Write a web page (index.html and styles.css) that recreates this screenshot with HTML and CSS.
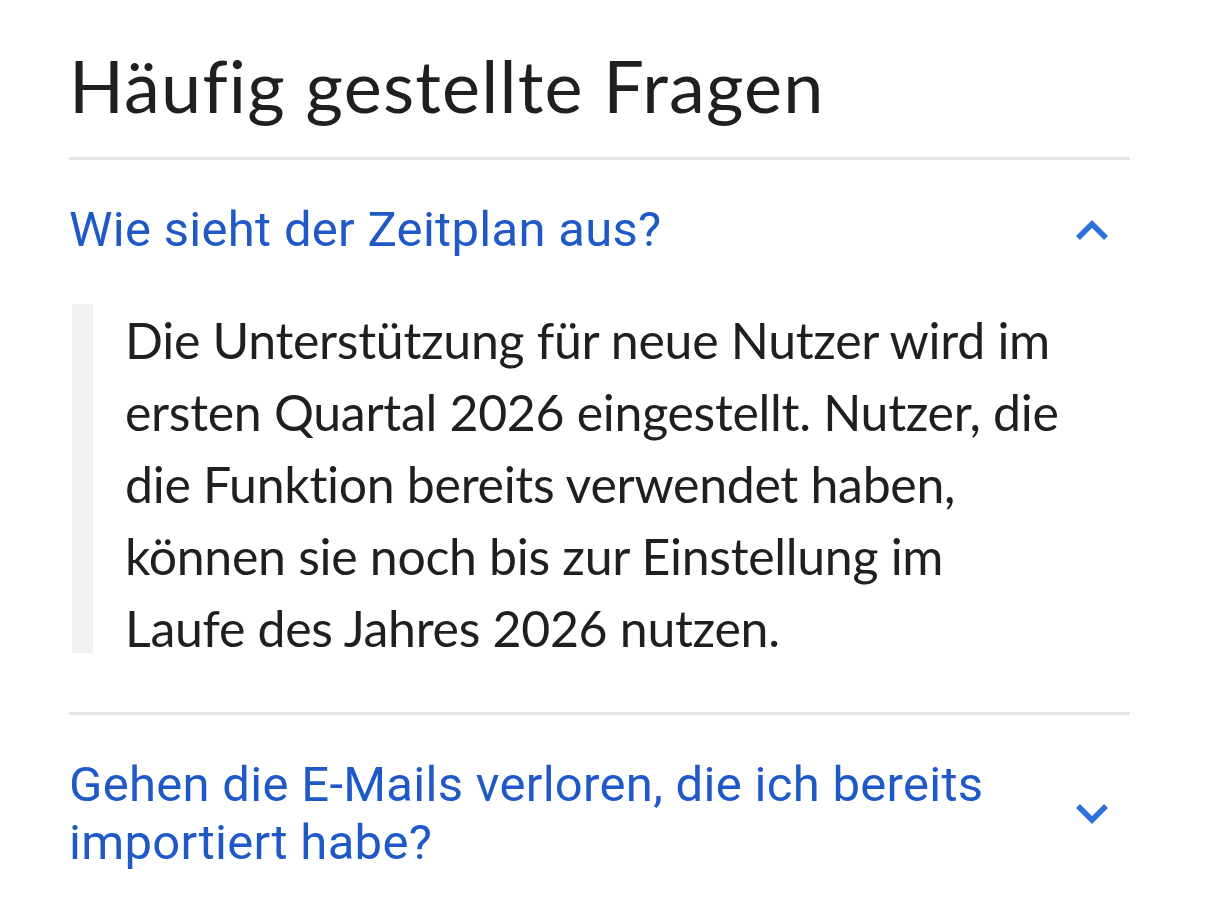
FILE: index.html
```html
<!DOCTYPE html>
<html lang="de">
<head>
    <meta charset="UTF-8">
    <meta name="viewport" content="width=device-width, initial-scale=1.0">
    <title>Häufig gestellte Fragen</title>
    <link rel="stylesheet" href="styles.css">
</head>
<body>
    <div class="faq">
        <h1>Häufig gestellte Fragen</h1>

        <div class="faq-item open">
            <div class="faq-question">
                <span>Wie sieht der Zeitplan aus?</span>
                <svg class="chevron" width="36" height="20" viewBox="0 0 36 20">
                    <polyline points="4,18 18,4 32,18" />
                </svg>
            </div>
            <div class="faq-answer">
                <p>Die Unterstützung für neue Nutzer wird im ersten Quartal 2026 eingestellt. Nutzer, die die Funktion bereits verwendet haben, können sie noch bis zur Einstellung im Laufe des Jahres 2026 nutzen.</p>
            </div>
        </div>

        <div class="faq-item">
            <div class="faq-question">
                <span>Gehen die E-Mails verloren, die ich bereits importiert habe?</span>
                <svg class="chevron" width="36" height="20" viewBox="0 0 36 20">
                    <polyline points="4,2 18,16 32,2" />
                </svg>
            </div>
        </div>
    </div>
</body>
</html>
```

FILE: styles.css
```css
body {
    margin: 0;
    background: #fff;
    color: #1f1f1f;
    font-family: Lato, "Noto Sans", sans-serif;
}
.faq {
    padding: 0 76px 0 69px;
}
h1 {
    margin: 0 0 30px 0;
    padding-top: 43px;
    font-size: 72px;
    font-weight: 400;
    line-height: 84px;
    letter-spacing: 1.2px;
}
.faq-item {
    border-top: 3px solid #e3e3e3;
    padding: 41px 0 59px 0;
}
.faq-question {
    display: flex;
    align-items: center;
    justify-content: space-between;
    gap: 40px;
    font-family: Roboto, "Liberation Sans", sans-serif;
    font-size: 49px;
    line-height: 58px;
    letter-spacing: 0.3px;
    color: #1f58c7;
}
.chevron {
    flex-shrink: 0;
    margin-right: 20px;
}
.chevron polyline {
    fill: none;
    stroke: #2d6fdc;
    stroke-width: 5.5;
    stroke-linejoin: miter;
}
.faq-answer {
    display: flow-root;
    margin: 45px 0 0 3px;
    border-left: 21px solid #f1f1f1;
    padding: 0 64px 0 32px;
}
.faq-answer p {
    margin: 0 0 -11px 0;
    font-size: 50px;
    line-height: 72px;
    letter-spacing: -0.3px;
}
```
